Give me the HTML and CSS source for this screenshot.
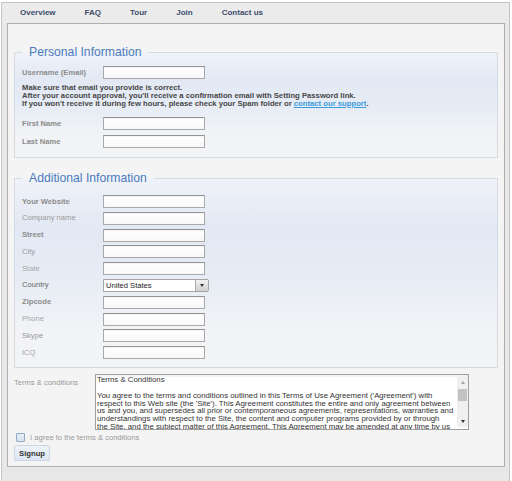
FILE: index.html
```html
<!DOCTYPE html>
<html lang="en">
<head>
<meta charset="utf-8">
<title>Signup</title>
<link rel="stylesheet" href="styles.css">
</head>
<body>
<div class="frame">
  <nav class="nav">
    <a class="nav-item" href="#">Overview</a>
    <a class="nav-item" href="#">FAQ</a>
    <a class="nav-item" href="#">Tour</a>
    <a class="nav-item" href="#">Join</a>
    <a class="nav-item" href="#">Contact us</a>
  </nav>
  <div class="panel">
    <form class="form">
      <fieldset class="group group-personal">
        <legend class="legend">Personal Information</legend>
        <div class="row"><label class="lbl lbl-b">Username (Email)</label><input class="inp" type="text"></div>
        <p class="help">Make sure that email you provide is correct.<br>After your account approval, you'll receive a confirmation email with Setting Password link.<br>If you won't receive it during few hours, please check your Spam folder or <a class="help-link" href="#">contact our support</a>.</p>
        <div class="row row-first"><label class="lbl lbl-b">First Name</label><input class="inp" type="text"></div>
        <div class="row row-last"><label class="lbl lbl-b">Last Name</label><input class="inp" type="text"></div>
      </fieldset>
      <fieldset class="group group-additional">
        <legend class="legend">Additional Information</legend>
        <div class="row"><label class="lbl lbl-b">Your Website</label><input class="inp" type="text"></div>
        <div class="row"><label class="lbl">Company name</label><input class="inp" type="text"></div>
        <div class="row"><label class="lbl lbl-b">Street</label><input class="inp" type="text"></div>
        <div class="row"><label class="lbl">City</label><input class="inp" type="text"></div>
        <div class="row"><label class="lbl lbl-light">State</label><input class="inp" type="text"></div>
        <div class="row"><label class="lbl lbl-dark">Country</label>
          <div class="select"><span class="select-value">United States</span><span class="select-btn"><span class="tri-down"></span></span></div>
        </div>
        <div class="row"><label class="lbl lbl-b">Zipcode</label><input class="inp" type="text"></div>
        <div class="row"><label class="lbl lbl-light">Phone</label><input class="inp" type="text"></div>
        <div class="row"><label class="lbl">Skype</label><input class="inp" type="text"></div>
        <div class="row"><label class="lbl lbl-light">ICQ</label><input class="inp" type="text"></div>
      </fieldset>
      <div class="terms">
        <label class="terms-lbl">Terms &amp; conditions</label>
        <div class="terms-box">
          <div class="terms-text">Terms &amp; Conditions<br><br>You agree to the terms and conditions outlined in this Terms of Use Agreement ('Agreement') with<br>respect to this Web site (the 'Site'). This Agreement constitutes the entire and only agreement between<br>us and you, and supersedes all prior or contemporaneous agreements, representations, warranties and<br>understandings with respect to the Site, the content and computer programs provided by or through<br>the Site, and the subject matter of this Agreement. This Agreement may be amended at any time by us</div>
          <div class="scroll">
            <div class="scroll-btn"><span class="tri-up"></span></div>
            <div class="scroll-track"><div class="scroll-thumb"></div></div>
            <div class="scroll-btn"><span class="tri-down"></span></div>
          </div>
        </div>
      </div>
      <div class="agree"><span class="check"></span><span class="agree-lbl">I agree to the terms &amp; conditions</span></div>
      <button class="btn" type="button">Signup</button>
    </form>
  </div>
</div>
</body>
</html>
```
FILE: styles.css
```css
html, body {
  margin: 0;
  padding: 0;
  background: #ffffff;
}
body {
  font-family: "Liberation Sans", Arial, sans-serif;
  font-size: 7.6px;
}
.frame {
  margin: 2px 2px 0 1px;
  border: 1px solid #c4c4c4;
  border-bottom: none;
  background: #e8e8e8;
  min-height: 479px;
  box-sizing: border-box;
}
.nav {
  height: 20px;
  display: flex;
  align-items: center;
  gap: 29px;
  padding-left: 18px;
  background: #ebebeb;
}
.nav-item {
  font-size: 8px;
  font-weight: bold;
  color: #3d4c6c;
  text-decoration: none;
  line-height: 10px;
}
.panel {
  margin: 0 4px 0 5px;
  border: 1px solid #afafaf;
  background: #f4f4f4;
  padding: 20px 6px 5px 6px;
}
.form {
  margin: 0;
  display: flex;
  flex-direction: column;
  align-items: flex-start;
}
.group {
  margin: 0;
  width: 100%;
  box-sizing: border-box;
  border: 1px solid #d6dbe2;
  padding: 6px 7px 10px 7px;
  background: linear-gradient(#eff2f8 0%, #e2e9f4 25%, #e6ecf5 50%, #f1f3f6 80%, #f3f4f6 100%);
  display: flex;
  flex-direction: column;
  gap: 4px;
}
.group-personal {
  padding-bottom: 9px;
}
.group-additional {
  margin-top: 12px;
  padding-top: 9px;
  padding-bottom: 8px;
  gap: 3.8px;
}
.legend {
  padding: 0 7px;
  font-size: 12.2px;
  line-height: 16px;
  color: #4a7bbd;
}
.row {
  display: flex;
  align-items: center;
  height: 13px;
}
.row-first {
  margin-top: 5px;
}
.row-last {
  margin-top: 1px;
}
.lbl {
  width: 81px;
  flex: none;
  color: #999999;
  line-height: 8px;
}
.lbl-b {
  font-weight: bold;
  color: #8c8c8c;
}
.lbl-light {
  color: #a6a6a6;
}
.lbl-dark {
  color: #666666;
}
.inp {
  margin: 0;
  padding: 0 2px;
  width: 102px;
  height: 13px;
  box-sizing: border-box;
  border: 1px solid #a9a9a9;
  border-top-color: #939393;
  background: linear-gradient(#ffffff, #f8f8f8);
  box-shadow: inset 0 1px 1px rgba(0, 0, 0, 0.05);
  font: inherit;
}
.help {
  margin: 1px 0 0;
  font-size: 7.7px;
  font-weight: bold;
  color: #474747;
  line-height: 8px;
  white-space: nowrap;
}
.help-link {
  color: #3b9bdc;
  text-decoration: underline;
}
.select {
  width: 106px;
  height: 13px;
  box-sizing: border-box;
  display: flex;
  border: 1px solid #a5a5a5;
  border-radius: 0 2px 2px 0;
  background: #ffffff;
}
.select-value {
  flex: 1;
  padding-left: 2px;
  color: #222222;
  line-height: 11px;
}
.select-btn {
  width: 12px;
  border-left: 1px solid #a9a9a9;
  background: linear-gradient(#f2f2f2, #cfcfcf);
  display: flex;
  align-items: center;
  justify-content: center;
}
.tri-down {
  width: 0;
  height: 0;
  border-left: 2.5px solid transparent;
  border-right: 2.5px solid transparent;
  border-top: 3px solid #333333;
}
.tri-up {
  width: 0;
  height: 0;
  border-left: 2.5px solid transparent;
  border-right: 2.5px solid transparent;
  border-bottom: 3px solid #a3a3a3;
}
.terms {
  margin-top: 6px;
  display: flex;
  align-items: flex-start;
}
.terms-lbl {
  width: 81px;
  padding-top: 5px;
  color: #9a9a9a;
  line-height: 8px;
}
.terms-box {
  width: 374px;
  height: 56px;
  box-sizing: border-box;
  display: flex;
  border: 1px solid #9f9f9f;
  background: #ffffff;
  box-shadow: inset 0 2px 2px rgba(0, 0, 0, 0.06);
}
.terms-text {
  flex: 1;
  overflow: hidden;
  padding: 1px 1px 0 1px;
  font-size: 7.8px;
  color: #333333;
  line-height: 7.8px;
  white-space: nowrap;
}
.scroll {
  width: 11px;
  flex: none;
  margin: 1px 0 2px;
  display: flex;
  flex-direction: column;
  background: #f0f0f0;
}
.scroll-btn {
  height: 12px;
  display: flex;
  align-items: center;
  justify-content: center;
}
.scroll-track {
  flex: 1;
  padding: 1px 1px 0;
}
.scroll-thumb {
  height: 12px;
  background: #c2c2c2;
}
.agree {
  margin-top: 3px;
  margin-left: 2px;
  display: flex;
  align-items: center;
  gap: 5px;
  height: 9px;
}
.check {
  width: 9px;
  height: 9px;
  box-sizing: border-box;
  border: 1px solid #90a9c8;
  border-radius: 1px;
  background: linear-gradient(#e8eff8, #d5e1f0);
}
.agree-lbl {
  color: #9a9a9a;
  line-height: 8px;
}
.btn {
  margin-top: 3px;
  height: 16px;
  padding: 0 4px;
  border: 1px solid #cdd6e3;
  border-radius: 2px;
  background: linear-gradient(#eef3fa, #dce5f1);
  font-family: inherit;
  font-size: 7.7px;
  font-weight: bold;
  color: #333333;
}
```
